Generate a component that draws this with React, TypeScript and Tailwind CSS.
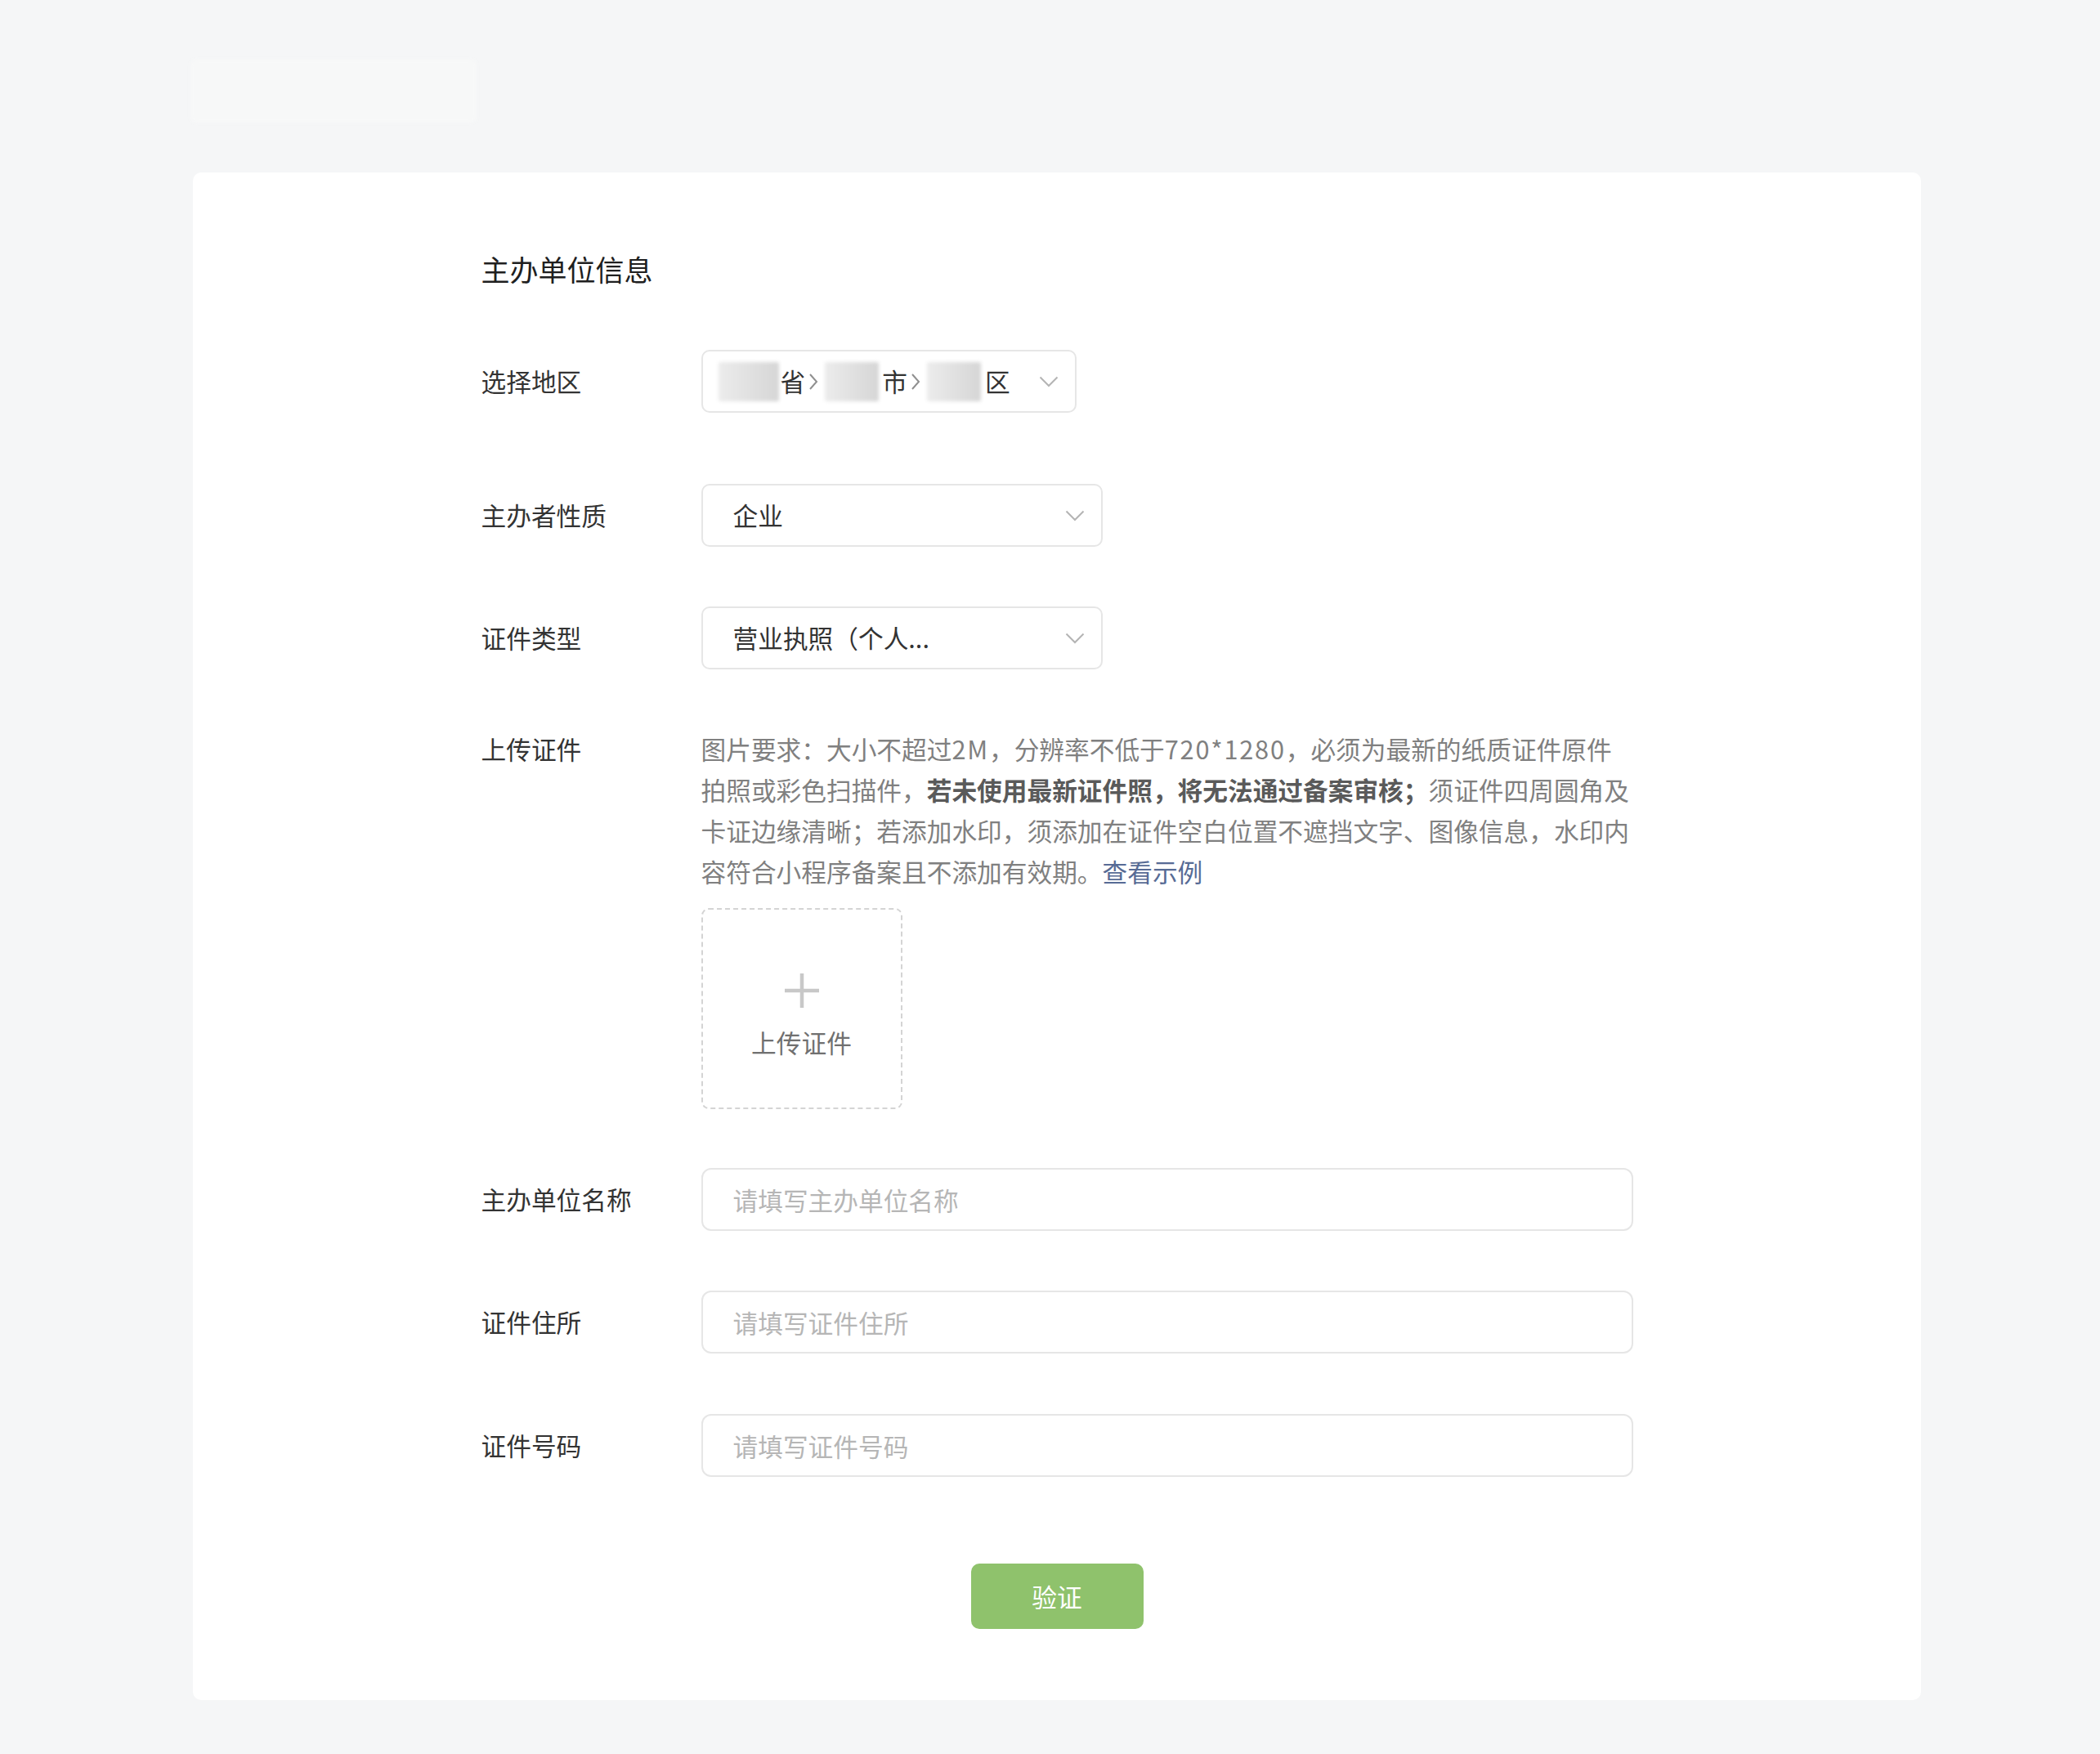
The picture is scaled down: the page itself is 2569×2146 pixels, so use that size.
import React from 'react';

const font = { fontFamily: '"Noto Sans CJK SC", "Noto Sans", sans-serif' };

const ChevronDown = () => (
  <svg width="24" height="14" viewBox="0 0 24 14" fill="none" className="shrink-0">
    <path d="M1.5 1.5 L12 12 L22.5 1.5" stroke="#b4b4b4" strokeWidth="2" />
  </svg>
);

const Arrow = () => (
  <svg width="12" height="24" viewBox="0 0 12 24" fill="none" className="shrink-0 ml-[4px] mr-[8px]">
    <path d="M2 3 L10 12 L2 21" stroke="#8f8f8f" strokeWidth="2" />
  </svg>
);

const Blur = ({ w }: { w: string }) => (
  <span className={`${w} h-[48px] rounded-[2px] bg-gradient-to-r from-[#ececec] to-[#d6d6d6] blur-[2px]`} />
);

const Label = ({ children, top }: { children: React.ReactNode; top?: boolean }) => (
  <div className={`w-[269px] shrink-0 text-[30.7px] text-[#333] ${top ? 'leading-[50px]' : ''}`}>{children}</div>
);

const SelectBox = ({ children, w }: { children: React.ReactNode; w: string }) => (
  <div className={`${w} h-[77px] flex items-center justify-between pl-[37px] pr-[20px] border-2 border-[#e6e6e6] rounded-[10px] text-[30.7px] text-[#333]`}>
    <span>{children}</span>
    <ChevronDown />
  </div>
);

const TextField = ({ placeholder }: { placeholder: string }) => (
  <input
    placeholder={placeholder}
    className="w-[1140px] h-[77px] px-[37px] border-2 border-[#e6e6e6] rounded-[12px] text-[30.7px] text-[#333] placeholder:text-[#b6b6b6] outline-none bg-white"
  />
);

export default function App() {
  return (
    <div className="min-h-[2146px] w-full bg-[#f5f6f7] pt-[73px] pb-[65px]" style={font}>
      {/* faint header logo */}
      <div className="ml-[233px] w-[350px] h-[77px] rounded-[6px] bg-[#f7f8f8] blur-[2px]" />

      <div className="ml-[236px] mt-[61px] w-[2114px] bg-white rounded-[10px] pt-[93px] pb-[87px]">
        <div className="w-[1409px] mx-auto flex flex-col">
          <div className="text-[35px] leading-[50px] text-[#1f1f1f]">主办单位信息</div>

          <div className="mt-[74px] flex items-center">
            <Label>选择地区</Label>
            <div className="w-[459px] h-[77px] flex items-center pl-[19px] pr-[20px] border-2 border-[#e6e6e6] rounded-[10px] text-[30.7px] text-[#333]">
              <Blur w="w-[74px]" />
              <span className="ml-[2px]">省</span>
              <Arrow />
              <Blur w="w-[66px]" />
              <span className="ml-[4px]">市</span>
              <Arrow />
              <Blur w="w-[66px]" />
              <span className="ml-[5px]">区</span>
              <span className="flex-1" />
              <ChevronDown />
            </div>
          </div>

          <div className="mt-[87px] flex items-center">
            <Label>主办者性质</Label>
            <SelectBox w="w-[491px]">企业</SelectBox>
          </div>

          <div className="mt-[73px] flex items-center">
            <Label>证件类型</Label>
            <SelectBox w="w-[491px]">营业执照（个人...</SelectBox>
          </div>

          <div className="mt-[72px] flex items-start">
            <Label top>上传证件</Label>
            <div className="flex flex-col">
              <p className="text-[30.7px] leading-[50px] text-[#808080] whitespace-nowrap">
                图片要求：大小不超过<span className="tracking-[1.8px]">2M</span>，分辨率不低于<span className="tracking-[1.8px]">720*1280</span>，必须为最新的纸质证件原件
                <br />
                拍照或彩色扫描件，<span className="font-bold text-[#5a5a5a]">若未使用最新证件照，将无法通过备案审核；</span>须证件四周圆角及
                <br />
                卡证边缘清晰；若添加水印，须添加在证件空白位置不遮挡文字、图像信息，水印内
                <br />
                容符合小程序备案且不添加有效期。<span className="text-[#576b95]">查看示例</span>
              </p>
              <div className="mt-[20px] w-[246px] h-[246px] border-2 border-dashed border-[#d4d4d4] rounded-[9px] flex flex-col items-center pt-[77px]">
                <svg width="44" height="44" viewBox="0 0 44 44">
                  <path d="M22 1 V43 M1 22 H43" stroke="#c8c8c8" strokeWidth="4.5" />
                </svg>
                <span className="mt-[21px] text-[30.7px] leading-[40px] text-[#707070]">上传证件</span>
              </div>
            </div>
          </div>

          <div className="mt-[72px] flex items-center">
            <Label>主办单位名称</Label>
            <TextField placeholder="请填写主办单位名称" />
          </div>

          <div className="mt-[73px] flex items-center">
            <Label>证件住所</Label>
            <TextField placeholder="请填写证件住所" />
          </div>

          <div className="mt-[74px] flex items-center">
            <Label>证件号码</Label>
            <TextField placeholder="请填写证件号码" />
          </div>

          <button className="mt-[106px] self-center w-[211px] h-[80px] rounded-[10px] bg-[#8fc26c] text-white text-[30.7px]">
            验证
          </button>
        </div>
      </div>
    </div>
  );
}
